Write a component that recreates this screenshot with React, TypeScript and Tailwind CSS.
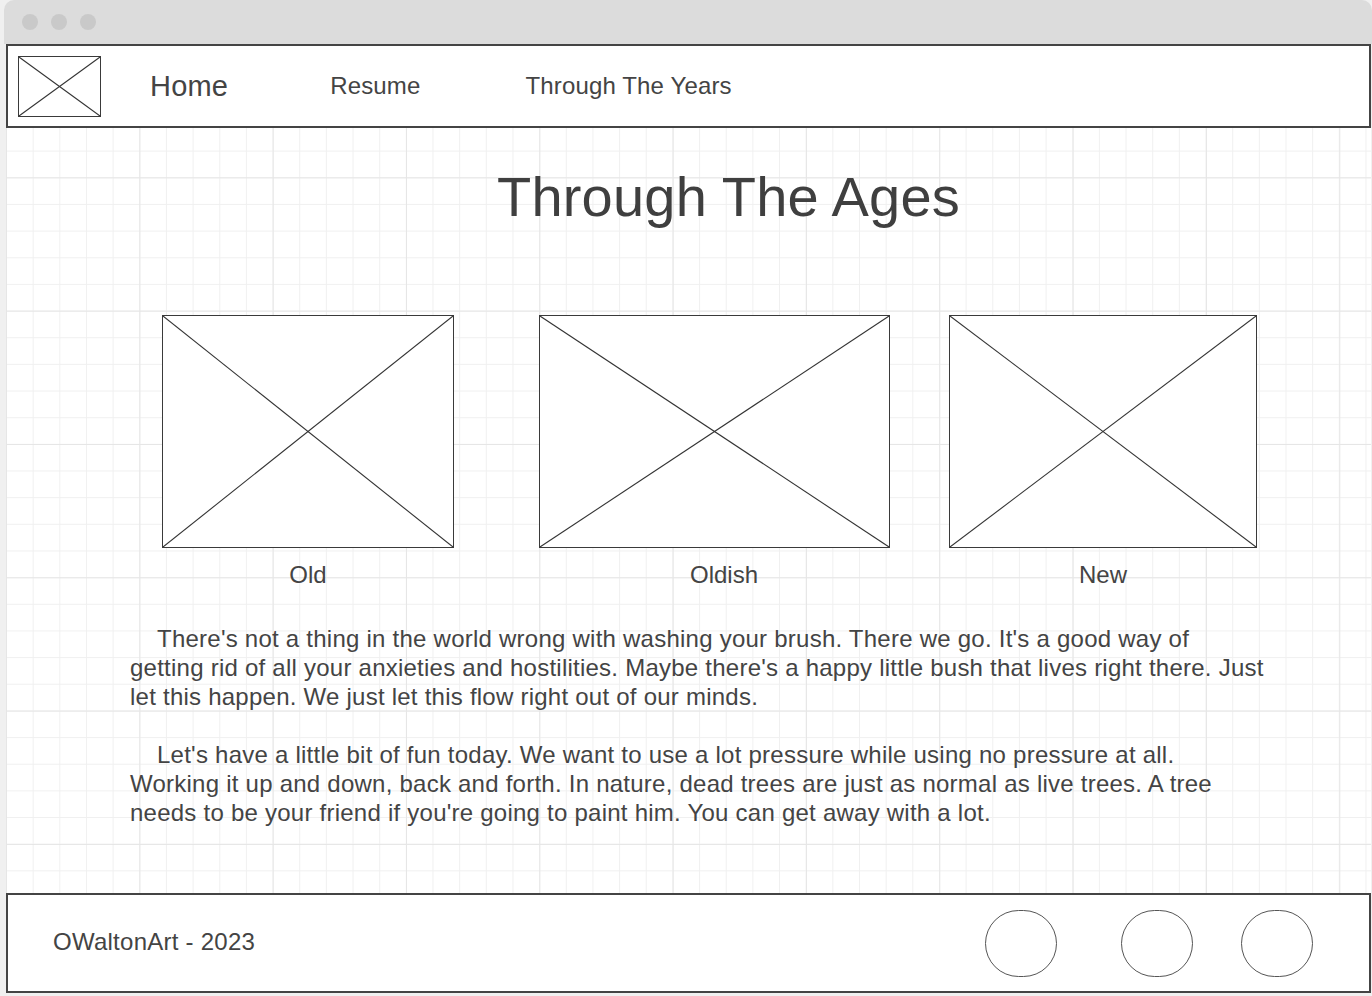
import React from "react";

// wireframe placeholder: box with an X through it
function Placeholder({ className }: { className: string }) {
  return (
    <div className={"relative border border-[#3a3a3a] bg-white " + className}>
      <svg className="absolute inset-0 w-full h-full" viewBox="0 0 100 100" preserveAspectRatio="none">
        <line x1="0" y1="0" x2="100" y2="100" stroke="#333" strokeWidth="1.1" vectorEffect="non-scaling-stroke" />
        <line x1="100" y1="0" x2="0" y2="100" stroke="#333" strokeWidth="1.1" vectorEffect="non-scaling-stroke" />
      </svg>
    </div>
  );
}

const para1 = [
  "There's not a thing in the world wrong with washing your brush. There we go. It's a good way of",
  "getting rid of all your anxieties and hostilities. Maybe there's a happy little bush that lives right there. Just",
  "let this happen. We just let this flow right out of our minds.",
];

const para2 = [
  "Let's have a little bit of fun today. We want to use a lot pressure while using no pressure at all.",
  "Working it up and down, back and forth. In nature, dead trees are just as normal as live trees. A tree",
  "needs to be your friend if you're going to paint him. You can get away with a lot.",
];

const gallery = [
  { label: "Old", w: "w-[292px]", ml: "ml-[156px]", shift: "" },
  { label: "Oldish", w: "w-[351px]", ml: "ml-[85px]", shift: "pl-[19px]" },
  { label: "New", w: "w-[308px]", ml: "ml-[59px]", shift: "" },
];

function Paragraph({ lines }: { lines: string[] }) {
  return (
    <div className="text-[24px] leading-[29px] text-[#444] tracking-[0.24px]">
      {lines.map((l, i) => (
        <div key={i} className={"whitespace-nowrap " + (i === 0 ? "pl-[27px]" : "")}>
          {l}
        </div>
      ))}
    </div>
  );
}

export default function App() {
  return (
    <div className="w-[1372px] h-[996px] bg-[#f0f0f0] overflow-hidden font-['Liberation_Sans',Arial,sans-serif]">
      {/* window title bar */}
      <div className="ml-[4px] h-[44px] bg-[#dcdcdc] rounded-t-[10px] flex items-center gap-[13px] pl-[18px]">
        <span className="w-[16px] h-[16px] rounded-full bg-[#c9c9c9]" />
        <span className="w-[16px] h-[16px] rounded-full bg-[#c9c9c9]" />
        <span className="w-[16px] h-[16px] rounded-full bg-[#c9c9c9]" />
      </div>

      {/* page body with grid */}
      <div className="ml-[6px] w-[1365px] h-[949px] flex flex-col bg-white [background-image:linear-gradient(to_right,#e6e6e6_1px,transparent_1px),linear-gradient(to_bottom,#e6e6e6_1px,transparent_1px),linear-gradient(to_right,#f0f0f0_1px,transparent_1px),linear-gradient(to_bottom,#f0f0f0_1px,transparent_1px)] [background-size:133.333px_133.333px,133.333px_133.333px,26.6667px_26.6667px,26.6667px_26.6667px]">
        {/* nav */}
        <header className="h-[84px] border-2 border-[#444] bg-white flex items-center text-[#444]">
          <Placeholder className="ml-[10px] w-[83px] h-[61px]" />
          <span className="ml-[49px] text-[29px] leading-none tracking-[0.2px]">Home</span>
          <span className="ml-[102px] text-[24px] leading-none tracking-[0.15px]">Resume</span>
          <span className="ml-[105px] text-[24px] leading-none tracking-[0.15px]">Through The Years</span>
        </header>

        <main className="flex-1 flex flex-col">
          <h1 className="mt-[41px] pl-[491px] text-[56px] leading-none text-[#3f3f3f] tracking-[0.2px] whitespace-nowrap">
            Through The Ages
          </h1>

          <div className="mt-[90px] flex">
            {gallery.map((g) => (
              <div key={g.label} className={"flex flex-col " + g.ml}>
                <Placeholder className={g.w + " h-[233px]"} />
                <div className={"mt-[15px] text-center text-[24px] leading-none text-[#444] " + g.shift}>{g.label}</div>
              </div>
            ))}
          </div>

          <div className="mt-[37px] ml-[124px] flex flex-col gap-[29px]">
            <Paragraph lines={para1} />
            <Paragraph lines={para2} />
          </div>
        </main>

        {/* footer */}
        <footer className="h-[100px] border-2 border-[#444] bg-white flex items-center text-[#444]">
          <span className="ml-[45px] mb-[2px] text-[24px] leading-none tracking-[0.25px]">OWaltonArt - 2023</span>
          <div className="ml-auto mr-[56px] flex items-center">
            <span className="w-[72px] h-[67px] rounded-full border border-[#555]" />
            <span className="ml-[64px] w-[72px] h-[67px] rounded-full border border-[#555]" />
            <span className="ml-[48px] w-[72px] h-[67px] rounded-full border border-[#555]" />
          </div>
        </footer>
      </div>
    </div>
  );
}
